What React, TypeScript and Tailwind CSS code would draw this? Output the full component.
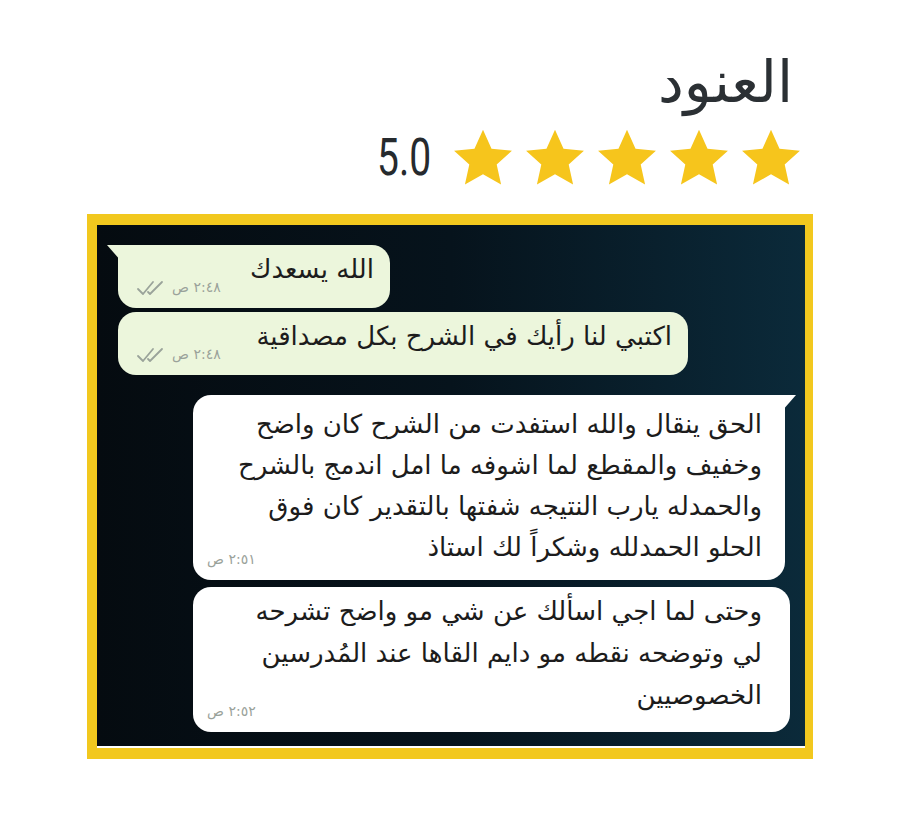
import React from 'react';

const arabic = { fontFamily: '"DejaVu Sans", "Noto Sans", sans-serif' };

function Star() {
    return (
        <svg width="62" height="60" viewBox="0 0 24 23" className="block">
            <path d="M12 0.6l3.3 7.3 7.9 0.8-5.9 5.3 1.7 7.8L12 17.8l-7 4 1.7-7.8L0.8 8.7l7.9-0.8z" fill="#f6c51c" />
        </svg>
    );
}

function Checks() {
    return (
        <svg width="30" height="16" viewBox="0 0 30 16" className="block">
            <path d="M2 9l5 5L17 2M12 12l2 2L26 2" fill="none" stroke="#9aa39a" strokeWidth="1.8" strokeLinecap="round" strokeLinejoin="round" />
        </svg>
    );
}

function TailLeft() {
    return (
        <svg width="14" height="16" viewBox="0 0 14 16" className="absolute left-[-11px] top-0">
            <path d="M0 0h14v16z" fill="#ecf6dc" />
        </svg>
    );
}

function TailRight() {
    return (
        <svg width="14" height="16" viewBox="0 0 14 16" className="absolute right-[-11px] top-0">
            <path d="M14 0H0v16z" fill="#ffffff" />
        </svg>
    );
}

function Meta({ time, checks }: { time: string; checks?: boolean }) {
    return (
        <div className="flex items-center gap-[6px] text-[14px] text-[#9aa29a]" style={arabic}>
            {checks && <Checks />}
            <span dir="rtl">{time}</span>
        </div>
    );
}

export default function App() {
    const longMsg = [
        'الحق ينقال والله استفدت من الشرح كان واضح',
        'وخفيف والمقطع لما اشوفه ما امل اندمج بالشرح',
        'والحمدله يارب النتيجه شفتها بالتقدير كان فوق',
        'الحلو الحمدلله وشكراً لك استاذ',
    ];
    const secondMsg = [
        'وحتى لما اجي اسألك عن شي مو واضح تشرحه',
        'لي وتوضحه نقطه مو دايم القاها عند المُدرسين',
        'الخصوصيين',
    ];

    return (
        <div className="w-[898px] h-[825px] bg-white overflow-hidden">
            {/* Name */}
            <div className="pt-[42px] pr-[105px] text-right text-[#2b3034] text-[58px] leading-[80px]" dir="rtl" style={arabic}>
                العنود
            </div>

            {/* Rating */}
            <div className="flex items-center justify-end pr-[96px] mt-[6px] gap-[14px]">
                <span className="text-[52px] leading-none text-[#262a2e] scale-x-75 mr-[-2px]" style={{ fontFamily: '"Liberation Sans Narrow", Roboto, sans-serif' }}>5.0</span>
                <div className="flex gap-[10px]">
                    <Star /><Star /><Star /><Star /><Star />
                </div>
            </div>

            {/* Screenshot frame */}
            <div className="ml-[87px] mt-[26px] w-[726px] border-l-[10px] border-t-[11px] border-r-[8px] border-b-[11px] border-[#f2c81e]">
                <div className="h-[523px] border-b-[2px] border-white bg-gradient-to-r from-[#050b10] via-[#06131c] to-[#0b2a3a] pt-[20px] pl-[21px] pr-[10px]">
                    <div className="relative w-[272px] h-[63px] bg-[#ecf6dc] rounded-[18px] rounded-tl-none flex items-end justify-between pl-[18px] pr-[16px] pb-[10px]">
                        <TailLeft />
                        <Meta time="٢:٤٨ ص" checks />
                        <span className="text-[26px] text-[#1c1c1c] self-center mt-[-4px]" dir="rtl" style={arabic}>الله يسعدك</span>
                    </div>
                    <div className="mt-[4px] w-[570px] h-[63px] bg-[#ecf6dc] rounded-[18px] flex items-end justify-between pl-[18px] pr-[16px] pb-[10px]">
                        <Meta time="٢:٤٨ ص" checks />
                        <span className="text-[26px] text-[#1c1c1c] self-center mt-[-4px]" dir="rtl" style={arabic}>اكتبي لنا رأيك في الشرح بكل مصداقية</span>
                    </div>

                    <div className="relative mt-[20px] ml-[75px] w-[592px] h-[185px] bg-white rounded-[18px] rounded-tr-none pt-[9px] pr-[23px] pl-[14px]">
                        <TailRight />
                        <div className="text-right text-[26px] leading-[41px] text-[#1c1c1c]" dir="rtl" style={arabic}>
                            {longMsg.map((l) => <div key={l} className="whitespace-nowrap">{l}</div>)}
                        </div>
                        <div className="absolute left-[14px] bottom-[10px]"><Meta time="٢:٥١ ص" /></div>
                    </div>
                    <div className="relative mt-[7px] ml-[75px] w-[597px] h-[145px] bg-white rounded-[18px] pt-[3px] pr-[28px] pl-[14px]">
                        <div className="text-right text-[26px] leading-[42px] text-[#1c1c1c]" dir="rtl" style={arabic}>
                            {secondMsg.map((l) => <div key={l} className="whitespace-nowrap">{l}</div>)}
                        </div>
                        <div className="absolute left-[14px] bottom-[10px]"><Meta time="٢:٥٢ ص" /></div>
                    </div>
                </div>
            </div>
        </div>
    );
}
